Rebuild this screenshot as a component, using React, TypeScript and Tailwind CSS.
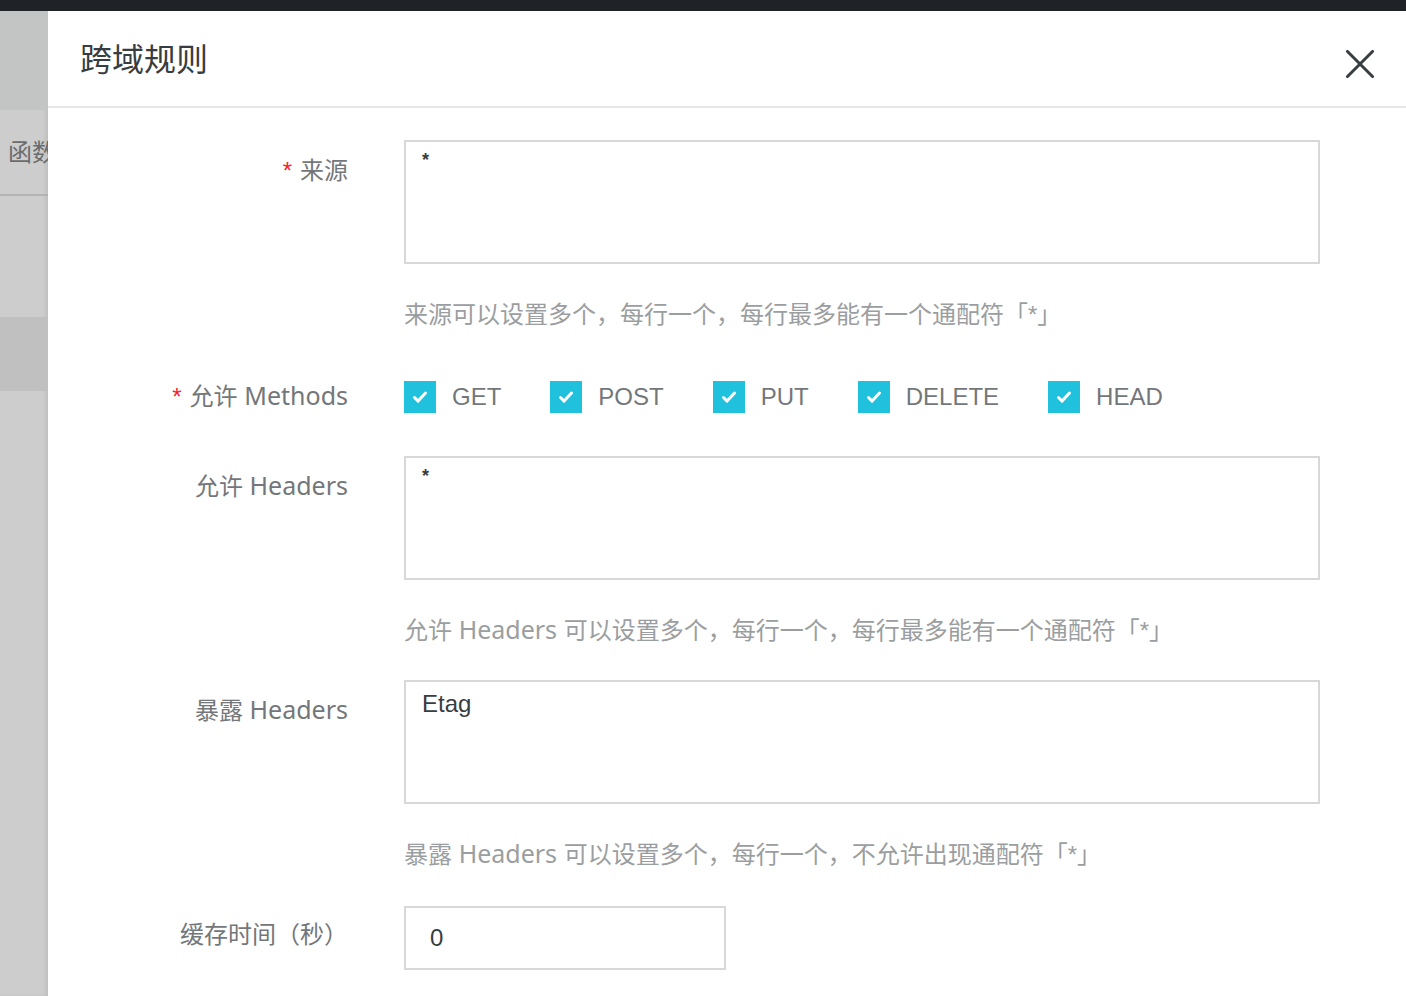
import React from 'react';

// 方法列表
const methods = ['GET', 'POST', 'PUT', 'DELETE', 'HEAD'];

const fontStack = "font-['Liberation_Sans','Noto_Sans_CJK_SC',sans-serif]";

// 中文语境中的英文单词字体略宽
const Latin: React.FC<{ children: React.ReactNode }> = ({ children }) => (
    <span className="font-['Noto_Sans','Noto_Sans_CJK_SC',sans-serif] text-[25px] leading-[24px]">{children}</span>
);

const Label: React.FC<{ required?: boolean; children: React.ReactNode; className?: string }> = ({ required, children, className }) => (
    <div className={`w-[300px] shrink-0 text-right text-[24px] leading-[36px] text-[#73777a] ${className ?? ''}`}>
        {required && <span className="mr-[8px] text-[#f5222d]">*</span>}
        {children}
    </div>
);

const TextBox: React.FC<{ value: string; small?: boolean }> = ({ value, small }) => (
    <div className="h-[124px] w-[916px] border-2 border-[#d7d8d9] bg-white px-[16px] text-[24px] leading-[36px] text-[#373d41]">
        {small ? (
            <span className="block pt-[6px] text-[18px] font-bold leading-[24px]">{value}</span>
        ) : (
            <span className="block pt-[4px]">{value}</span>
        )}
    </div>
);

const Help: React.FC<{ children: React.ReactNode }> = ({ children }) => (
    <div className="ml-[356px] h-[36px] text-[24px] leading-[36px] text-[#9b9ea0]">{children}</div>
);

const Check: React.FC = () => (
    <span className="flex h-[32px] w-[32px] items-center justify-center bg-[#1fc1dc]">
        <svg width="20" height="20" viewBox="0 0 20 20" fill="none">
            <path d="M4.5 10.5l3.6 3.6 7.4-8" stroke="white" strokeWidth="3" strokeLinecap="round" strokeLinejoin="round" />
        </svg>
    </span>
);

export default function App() {
    return (
        <div className={`flex h-[996px] w-[1406px] flex-col overflow-hidden bg-[#1f2328] ${fontStack}`}>
            <div className="h-[11px] shrink-0" />
            <div className="flex flex-1">
                {/* 左侧遮罩区域 */}
                <div className="flex w-[48px] shrink-0 flex-col bg-[#cdcdcd] shadow-[inset_-3px_0_3px_rgba(0,0,0,0.06)]">
                    <div className="h-[99px] bg-[#c3c4c4]" />
                    <div className="h-[84px] overflow-hidden whitespace-nowrap pl-[8px] pt-[25px] text-[24px] leading-[36px] text-[#6b6c6d]">函数</div>
                    <div className="h-[2px] bg-[#b3b3b3]" />
                    <div className="h-[121px]" />
                    <div className="h-[74px] bg-[#bfc0bf]" />
                </div>
                {/* 弹窗主体 */}
                <div className="flex flex-1 flex-col bg-white">
                    <div className="flex h-[97px] shrink-0 items-start justify-between border-b-2 border-[#e6e7e8] pl-[32px] pr-[32px]">
                        <h2 className="mt-[29px] text-[32px] leading-[40px] text-[#373d41]">跨域规则</h2>
                        <button className="mt-[39px] flex h-[28px] w-[28px] items-center justify-center">
                            <svg width="28" height="28" viewBox="0 0 28 28" fill="none">
                                <path d="M1.5 1.5l25 25M26.5 1.5l-25 25" stroke="#373d41" strokeWidth="3" strokeLinecap="round" />
                            </svg>
                        </button>
                    </div>

                    <div className="flex flex-col pt-[32px]">
                        <div className="flex gap-[56px]">
                            <Label required className="pt-[13px]">来源</Label>
                            <TextBox value="*" small />
                        </div>
                        <div className="mt-[33px]">
                            <Help>来源可以设置多个，每行一个，每行最多能有一个通配符「*」</Help>
                        </div>

                        <div className="mt-[46px] flex h-[36px] items-center gap-[56px]">
                            <Label required>允许 <Latin>Methods</Latin></Label>
                            <div className="flex items-center">
                                {methods.map((m) => (
                                    <label key={m} className="mr-[49px] flex items-center gap-[16px] text-[24px] leading-[36px] text-[#73777a]">
                                        <Check />
                                        <span>{m}</span>
                                    </label>
                                ))}
                            </div>
                        </div>

                        <div className="mt-[41px] flex gap-[56px]">
                            <Label className="pt-[13px]">允许 <Latin>Headers</Latin></Label>
                            <TextBox value="*" small />
                        </div>
                        <div className="mt-[33px]">
                            <Help>允许 <Latin>Headers</Latin> 可以设置多个，每行一个，每行最多能有一个通配符「*」</Help>
                        </div>

                        <div className="mt-[31px] flex gap-[56px]">
                            <Label className="pt-[13px]">暴露 <Latin>Headers</Latin></Label>
                            <TextBox value="Etag" />
                        </div>
                        <div className="mt-[33px]">
                            <Help>暴露 <Latin>Headers</Latin> 可以设置多个，每行一个，不允许出现通配符「*」</Help>
                        </div>

                        <div className="mt-[33px] flex gap-[56px]">
                            <Label className="pt-[11px]">缓存时间（秒）</Label>
                            <div className="flex h-[64px] w-[322px] items-center border-2 border-[#d7d8d9] pl-[24px] text-[24px] text-[#373d41]">0</div>
                        </div>
                    </div>
                </div>
            </div>
        </div>
    );
}
